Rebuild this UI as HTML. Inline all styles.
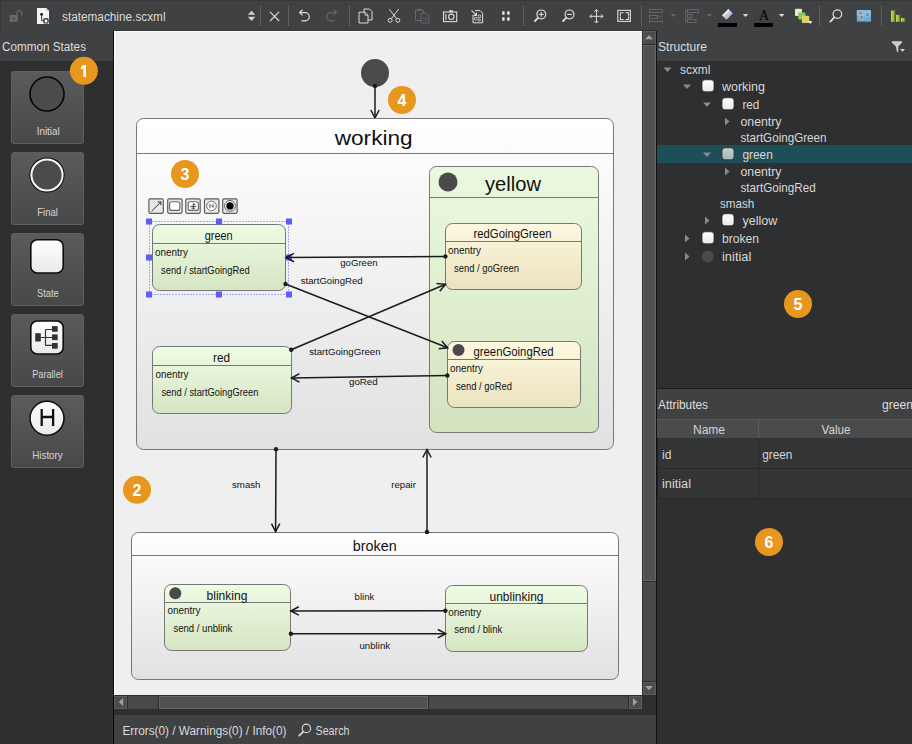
<!DOCTYPE html><html><head><meta charset="utf-8"><style>html,body{margin:0;padding:0;width:912px;height:744px;overflow:hidden;background:#404143;}svg{display:block;font-family:"Liberation Sans",sans-serif;}</style></head><body>
<svg width="912" height="744" viewBox="0 0 912 744">
<defs>
<linearGradient id="gWork" x1="0" y1="0" x2="0" y2="1"><stop offset="0" stop-color="#ffffff"/><stop offset="1" stop-color="#e1e1e1"/></linearGradient>
<linearGradient id="gGreen" x1="0" y1="0" x2="0" y2="1"><stop offset="0" stop-color="#effce6"/><stop offset="1" stop-color="#d5e5c2"/></linearGradient>
<linearGradient id="gYel" x1="0" y1="0" x2="0" y2="1"><stop offset="0" stop-color="#ebfadf"/><stop offset="1" stop-color="#d3e3c0"/></linearGradient>
<linearGradient id="gCream" x1="0" y1="0" x2="0" y2="1"><stop offset="0" stop-color="#fdf8e0"/><stop offset="1" stop-color="#ebe3bf"/></linearGradient>
<linearGradient id="gBtn" x1="0" y1="0" x2="0" y2="1"><stop offset="0" stop-color="#5a5b5d"/><stop offset="1" stop-color="#47484a"/></linearGradient>
<linearGradient id="gIcon" x1="0" y1="0" x2="0" y2="1"><stop offset="0" stop-color="#ffffff"/><stop offset="1" stop-color="#e9e9e9"/></linearGradient>
<linearGradient id="gIconSel" x1="0" y1="0" x2="0" y2="1"><stop offset="0" stop-color="#c8d0d2"/><stop offset="1" stop-color="#a9b5b8"/></linearGradient>
</defs>
<rect x="0" y="0" width="912" height="31" fill="#404143"/>
<rect x="0" y="0" width="912" height="1" fill="#37383a"/>
<rect x="0" y="0" width="1" height="31" fill="#37383a"/>
<rect x="9.8" y="15" width="8" height="6.8" fill="#68696b"/>
<rect x="12.6" y="17.4" width="2.4" height="2.4" fill="#4a4b4d"/>
<path d="M17 15.2 V12.8 A2.3 2.3 0 0 1 21.6 12.8 V15.6" fill="none" stroke="#68696b" stroke-width="1.2"/>
<path d="M37 8 H46 L49 11 V24 H37 Z" fill="#f4f4f4"/>
<path d="M46 8 V11 H49 Z" fill="#d0d0d0"/>
<circle cx="41.6" cy="14.4" r="1.4" fill="#000"/>
<path d="M41.6 14.6 V20.7 H43.5" fill="none" stroke="#222" stroke-width="0.9"/>
<rect x="43.9" y="18.9" width="4.1" height="4.1" rx="0.8" fill="#fff" stroke="#1a1a1a" stroke-width="1.2"/>
<text x="62" y="21" font-size="12" fill="#dcdcdc" textLength="103.5" lengthAdjust="spacingAndGlyphs" >statemachine.scxml</text>
<path d="M247.8 14.8 L251.6 10.8 L255.4 14.8 Z M247.8 16.8 L255.4 16.8 L251.6 21 Z" fill="#d0d0d0"/>
<rect x="260" y="5" width="1" height="21" fill="#5d5e60"/>
<path d="M270 11.8 L279.2 21 M279.2 11.8 L270 21" stroke="#dcdcdc" stroke-width="1.1"/>
<rect x="288" y="5" width="1" height="21" fill="#5d5e60"/>
<path d="M300 12.6 H305.2 A4.1 4.1 0 0 1 305.2 20.8 H301.3" fill="none" stroke="#dcdcdc" stroke-width="1.2"/>
<path d="M302.5 9.8 L299.6 12.6 L302.5 15.4" fill="none" stroke="#dcdcdc" stroke-width="1.2"/>
<path d="M336 12.6 H330.8 A4.1 4.1 0 0 0 330.8 20.8 H334.7" fill="none" stroke="#65666a" stroke-width="1.2"/>
<path d="M333.5 9.8 L336.4 12.6 L333.5 15.4" fill="none" stroke="#65666a" stroke-width="1.2"/>
<rect x="349" y="5" width="1" height="21" fill="#5d5e60"/>
<path d="M364 9 H369.5 L372 11.5 V20 H364 Z" fill="none" stroke="#dcdcdc" stroke-width="1"/>
<path d="M359 12.2 H365 L368 15.2 V23 H359 Z" fill="#404143" stroke="#dcdcdc" stroke-width="1"/>
<path d="M365 12.2 V15.2 H368" fill="none" stroke="#dcdcdc" stroke-width="0.8"/>
<path d="M389.3 9.2 L396.5 18.6 M398.6 9.2 L391.4 18.6" stroke="#dcdcdc" stroke-width="1"/>
<circle cx="390.1" cy="20.3" r="2" fill="none" stroke="#dcdcdc" stroke-width="1"/>
<circle cx="397.8" cy="20.3" r="2" fill="none" stroke="#dcdcdc" stroke-width="1"/>
<path d="M415.5 10.2 H423.5 V20.5 H415.5 Z" fill="none" stroke="#65666a" stroke-width="1"/>
<rect x="417.6" y="8.8" width="3.8" height="2.2" fill="#65666a"/>
<path d="M421 13.2 H426 L428.8 16 V23 H421 Z" fill="#404143" stroke="#65666a" stroke-width="1"/>
<path d="M422.6 18 H427 M422.6 20.3 H427" stroke="#65666a" stroke-width="0.8"/>
<rect x="443.5" y="12" width="13.2" height="9.6" fill="none" stroke="#dcdcdc" stroke-width="1.1"/>
<rect x="449.2" y="10.2" width="3.6" height="2" fill="#dcdcdc"/>
<circle cx="451.3" cy="16.8" r="2.7" fill="none" stroke="#dcdcdc" stroke-width="1.1"/>
<rect x="445.3" y="14" width="1.1" height="6" fill="#dcdcdc"/>
<path d="M475 10.6 H480 L482.6 13.2 V22.8 H473 V15" fill="none" stroke="#dcdcdc" stroke-width="1"/>
<path d="M471.4 10.4 L476.4 15.4 M476.4 12.6 V15.4 H473.6" fill="none" stroke="#dcdcdc" stroke-width="1.1"/>
<path d="M474.5 17.5 h2.5 v2.5 h-2.5 Z M478.2 15 h2.5 v2.5 h-2.5 Z M478.2 19 h2 v2 h-2 Z" fill="none" stroke="#dcdcdc" stroke-width="0.7"/>
<ellipse cx="503.4" cy="13" rx="1.5" ry="2" fill="#dcdcdc"/>
<ellipse cx="503.4" cy="19" rx="1.5" ry="2" fill="#dcdcdc"/>
<ellipse cx="508.4" cy="13" rx="1.5" ry="2" fill="#dcdcdc"/>
<ellipse cx="508.4" cy="19" rx="1.5" ry="2" fill="#dcdcdc"/>
<rect x="523" y="5" width="1" height="21" fill="#5d5e60"/>
<circle cx="541.3" cy="14.4" r="4.4" fill="none" stroke="#dcdcdc" stroke-width="1.2"/>
<path d="M538.0999999999999 17.8 L534.9 21" stroke="#dcdcdc" stroke-width="1.8" stroke-linecap="round"/>
<path d="M538.9 14.4 H543.6999999999999" stroke="#dcdcdc" stroke-width="1.1"/>
<path d="M541.3 12 V16.8" stroke="#dcdcdc" stroke-width="1.1"/>
<circle cx="569.5" cy="14.4" r="4.4" fill="none" stroke="#dcdcdc" stroke-width="1.2"/>
<path d="M566.3 17.8 L563.1 21" stroke="#dcdcdc" stroke-width="1.8" stroke-linecap="round"/>
<path d="M567.1 14.4 H571.9" stroke="#dcdcdc" stroke-width="1.1"/>
<path d="M596.4 9.6 V23 M589.8 16.3 H603" stroke="#dcdcdc" stroke-width="1"/>
<path d="M594.4 11.6 L596.4 9.6 L598.4 11.6 M594.4 21 L596.4 23 L598.4 21 M591.8 14.3 L589.8 16.3 L591.8 18.3 M601 14.3 L603 16.3 L601 18.3" fill="none" stroke="#dcdcdc" stroke-width="1"/>
<rect x="617.8" y="10.4" width="12.6" height="11" fill="none" stroke="#dcdcdc" stroke-width="1.1"/>
<path d="M620.4 15.8 V12.8 H623.6 M625.4 12.8 H628.5 V15.8 M628.5 16.6 V19.5 H625.4 M623.6 19.5 H620.4 V16.6" fill="none" stroke="#dcdcdc" stroke-width="1.1"/>
<rect x="641" y="5" width="1" height="21" fill="#5d5e60"/>
<rect x="649.5" y="9.5" width="13" height="3" fill="none" stroke="#65666a" stroke-width="1"/>
<rect x="649.5" y="15.5" width="8" height="3" fill="none" stroke="#65666a" stroke-width="1"/>
<rect x="658" y="15.5" width="4.5" height="3" fill="#4c4d4f"/>
<path d="M649.5 20 V23 M649.5 21.5 H662.5 M662.5 20 V23" stroke="#65666a" stroke-width="1" fill="none"/>
<path d="M670.7 13.9 H676.3 L673.5 16.900000000000002 Z" fill="#65666a"/>
<rect x="685.2" y="9" width="1" height="14" fill="#65666a"/>
<rect x="687.5" y="9.5" width="11" height="3" fill="none" stroke="#65666a" stroke-width="1"/>
<rect x="687.5" y="14.5" width="4.5" height="3" fill="none" stroke="#65666a" stroke-width="1"/>
<rect x="687.5" y="19.5" width="8.5" height="3" fill="none" stroke="#65666a" stroke-width="1"/>
<path d="M706.7 13.9 H712.3 L709.5 16.900000000000002 Z" fill="#65666a"/>
<path d="M722.1 15.4 L728.4 9.1 L732.8 13.3 L726.5 19.7 Z" fill="#c4c4c8"/>
<path d="M722.1 15.4 L728.4 9.1 L729.6 10.3 L723.4 16.6 Z" fill="#f2f2f2"/>
<path d="M728.2 10.8 L728.6 14.2 L727.4 13.6 Z" fill="#f6f6f6"/>
<path d="M732.6 12.3 Q734.6 13.6 733.6 17.8" fill="none" stroke="#1f3cc4" stroke-width="1.5"/>
<rect x="718" y="23" width="19" height="4" fill="#000"/>
<path d="M742.7 14.1 H748.3 L745.5 17.1 Z" fill="#d8d8d8"/>
<text x="764" y="20.1" font-size="14.5" fill="#000" text-anchor="middle" font-family="Liberation Serif">A</text>
<rect x="754.2" y="23" width="18.8" height="4" fill="#000"/>
<path d="M778.9000000000001 14.1 H784.5 L781.7 17.1 Z" fill="#d8d8d8"/>
<rect x="795" y="8.8" width="7" height="7.2" rx="1" fill="#e6e6e6"/>
<rect x="798.2" y="12.4" width="7.3" height="7" rx="1" fill="#7ad34a"/>
<rect x="801.9" y="15.8" width="7.3" height="7.2" rx="0.6" fill="#e2cd68"/>
<path d="M808.0 20.900000000000002 H812.4000000000001 L810.2 23.900000000000002 Z" fill="#f0f0f0"/>
<rect x="819" y="5" width="1" height="21" fill="#5d5e60"/>
<circle cx="837.4" cy="14.1" r="4.3" fill="none" stroke="#dcdcdc" stroke-width="1.2"/>
<path d="M834.3 17.3 L830.3 21.6" stroke="#dcdcdc" stroke-width="1.8" stroke-linecap="round"/>
<rect x="856.8" y="9.9" width="14.2" height="12.1" rx="0.8" fill="#5fb0de"/>
<rect x="856.8" y="9.9" width="14.2" height="6" rx="0.8" fill="#86c8ec" opacity="0.7"/>
<rect x="857" y="21.2" width="13.8" height="0.8" fill="#3d7ea6"/>
<rect x="858.3" y="11.2" width="3.8" height="3.6" fill="#8d8d8d" stroke="#c4c4c4" stroke-width="0.6"/>
<rect x="865.5" y="13" width="3.8" height="3.6" fill="#8d8d8d" stroke="#c4c4c4" stroke-width="0.6"/>
<rect x="860" y="15.7" width="3.8" height="3.6" fill="#8d8d8d" stroke="#c4c4c4" stroke-width="0.6"/>
<rect x="881" y="5" width="1" height="21" fill="#5d5e60"/>
<rect x="891.1" y="10.6" width="4" height="11.1" fill="#a6c23a"/>
<rect x="893.9" y="10.6" width="1.2" height="11.1" fill="#6f8a1e"/>
<rect x="891.1" y="10.6" width="1" height="11.1" fill="#c3d960"/>
<rect x="896.1" y="14.9" width="4" height="6.8" fill="#a6c23a"/>
<rect x="898.9" y="14.9" width="1.2" height="6.8" fill="#6f8a1e"/>
<rect x="896.1" y="14.9" width="1" height="6.8" fill="#c3d960"/>
<rect x="901.1" y="17.9" width="4" height="3.8" fill="#a6c23a"/>
<rect x="903.9" y="17.9" width="1.2" height="3.8" fill="#6f8a1e"/>
<rect x="901.1" y="17.9" width="1" height="3.8" fill="#c3d960"/>
<rect x="0" y="31" width="113" height="713" fill="#2e2f31"/>
<rect x="0" y="31" width="113" height="30" fill="#404143"/>
<text x="2" y="51" font-size="12" fill="#dedede" textLength="84" lengthAdjust="spacingAndGlyphs" >Common States</text>
<rect x="11.5" y="71.5" width="72" height="72" rx="2.5" fill="url(#gBtn)" stroke="#5e5f61" stroke-width="1"/>
<circle cx="47" cy="94" r="17" fill="#4b4b4b" stroke="#050505" stroke-width="1.6"/>
<text x="48.2" y="135" font-size="10.2" fill="#d6d6d6" text-anchor="middle" textLength="23" lengthAdjust="spacingAndGlyphs" >Initial</text>
<rect x="11.5" y="152.5" width="72" height="72" rx="2.5" fill="url(#gBtn)" stroke="#5e5f61" stroke-width="1"/>
<circle cx="47" cy="175" r="17.6" fill="#0a0a0a" />
<circle cx="47" cy="175" r="15.6" fill="#4b4b4b" stroke="#fafafa" stroke-width="2"/>
<text x="47.6" y="216" font-size="10.2" fill="#d6d6d6" text-anchor="middle" textLength="20.6" lengthAdjust="spacingAndGlyphs" >Final</text>
<rect x="11.5" y="233.5" width="72" height="72" rx="2.5" fill="url(#gBtn)" stroke="#5e5f61" stroke-width="1"/>
<rect x="30.8" y="239.7" width="32.4" height="33.3" rx="6.5" fill="url(#gIcon)" stroke="#0d0d0d" stroke-width="1.6"/>
<text x="47.9" y="297" font-size="10.2" fill="#d6d6d6" text-anchor="middle" textLength="21.6" lengthAdjust="spacingAndGlyphs" >State</text>
<rect x="11.5" y="314.5" width="72" height="72" rx="2.5" fill="url(#gBtn)" stroke="#5e5f61" stroke-width="1"/>
<rect x="30.8" y="321" width="32.4" height="33" rx="6.5" fill="url(#gIcon)" stroke="#0d0d0d" stroke-width="1.6"/>
<rect x="35.2" y="333.2" width="5.6" height="8.3" fill="#333"/>
<rect x="52" y="326.1" width="5.7" height="5.7" fill="#333"/>
<rect x="52" y="334.4" width="5.7" height="5.7" fill="#333"/>
<rect x="52" y="343" width="5.7" height="5.7" fill="#333"/>
<path d="M40.8 337.5 H52 M45.5 329.5 V345.4 M45.5 329.5 H52 M45.5 345.4 H52" stroke="#333" stroke-width="1.2" fill="none"/>
<text x="47.5" y="378" font-size="10.2" fill="#d6d6d6" text-anchor="middle" textLength="30.6" lengthAdjust="spacingAndGlyphs" >Parallel</text>
<rect x="11.5" y="395.5" width="72" height="72" rx="2.5" fill="url(#gBtn)" stroke="#5e5f61" stroke-width="1"/>
<circle cx="47" cy="418.2" r="17" fill="url(#gIcon)" stroke="#0d0d0d" stroke-width="1.5"/>
<path d="M41.7 408.9 V426.1 M53.1 408.9 V426.1 M41.7 417 H53.1" stroke="#111" stroke-width="2.3" fill="none"/>
<text x="47.5" y="459" font-size="10.2" fill="#d6d6d6" text-anchor="middle" textLength="30.6" lengthAdjust="spacingAndGlyphs" >History</text>
<rect x="113" y="30" width="543" height="714" fill="#2e2f31"/>
<rect x="113" y="30" width="530" height="1" fill="#37383a"/>
<rect x="113" y="31" width="1" height="713" fill="#080808"/>
<rect x="114" y="31" width="528" height="664" fill="#efefef"/>
<rect x="114" y="31" width="528" height="1" fill="#ffffff"/>
<rect x="114" y="31" width="1" height="664" fill="#ffffff"/>
<circle cx="375" cy="73" r="14" fill="#4a4a4a"/>
<line x1="375" y1="86" x2="375" y2="118" stroke="#1b1b1b" stroke-width="1.5"/>
<path d="M370.80,110.00 L375,118 L379.20,110.00" fill="none" stroke="#1b1b1b" stroke-width="1.5" stroke-linejoin="miter"/>
<circle cx="375" cy="86" r="2.2" fill="#1b1b1b"/>
<rect x="136.5" y="118.5" width="477" height="331" rx="7" fill="url(#gWork)" stroke="#777777" stroke-width="1"/>
<line x1="136" y1="153.5" x2="614" y2="153.5" stroke="#777777" stroke-width="1"/>
<text x="373.7" y="145" font-size="20.5" fill="#111" text-anchor="middle" textLength="78" lengthAdjust="spacingAndGlyphs" >working</text>
<rect x="429.5" y="166.5" width="169" height="266" rx="7" fill="url(#gYel)" stroke="#777777" stroke-width="1"/>
<line x1="429" y1="197.5" x2="599" y2="197.5" stroke="#777777" stroke-width="1"/>
<circle cx="448" cy="182" r="9.5" fill="#4a4a4a"/>
<text x="513" y="191" font-size="19.5" fill="#111" text-anchor="middle" textLength="56" lengthAdjust="spacingAndGlyphs" >yellow</text>
<rect x="445.5" y="223.5" width="136" height="66" rx="7" fill="url(#gCream)" stroke="#777777" stroke-width="1"/>
<line x1="445" y1="241.5" x2="582" y2="241.5" stroke="#777777" stroke-width="1"/>
<text x="512.5" y="238" font-size="13" fill="#111" text-anchor="middle" textLength="78" lengthAdjust="spacingAndGlyphs" >redGoingGreen</text>
<text x="448" y="254" font-size="10.5" fill="#111" textLength="33" lengthAdjust="spacingAndGlyphs" >onentry</text>
<text x="454" y="271.5" font-size="10.5" fill="#111" textLength="65" lengthAdjust="spacingAndGlyphs" >send / goGreen</text>
<rect x="447.5" y="341.5" width="133" height="66" rx="7" fill="url(#gCream)" stroke="#777777" stroke-width="1"/>
<line x1="447" y1="359.5" x2="581" y2="359.5" stroke="#777777" stroke-width="1"/>
<circle cx="458.5" cy="350" r="6" fill="#4a4a4a"/>
<text x="513.5" y="356" font-size="13" fill="#111" text-anchor="middle" textLength="80" lengthAdjust="spacingAndGlyphs" >greenGoingRed</text>
<text x="450" y="372" font-size="10.5" fill="#111" textLength="33" lengthAdjust="spacingAndGlyphs" >onentry</text>
<text x="456" y="389.5" font-size="10.5" fill="#111" textLength="56" lengthAdjust="spacingAndGlyphs" >send / goRed</text>
<rect x="152.5" y="224.5" width="133" height="66" rx="7" fill="url(#gGreen)" stroke="#777777" stroke-width="1"/>
<line x1="152" y1="243.5" x2="286" y2="243.5" stroke="#777777" stroke-width="1"/>
<text x="218.7" y="239.8" font-size="12.3" fill="#111" text-anchor="middle" textLength="28" lengthAdjust="spacingAndGlyphs" >green</text>
<text x="155" y="255.9" font-size="10.5" fill="#111" textLength="33" lengthAdjust="spacingAndGlyphs" >onentry</text>
<text x="161" y="273.5" font-size="10.5" fill="#111" textLength="88.6" lengthAdjust="spacingAndGlyphs" >send / startGoingRed</text>
<rect x="152.5" y="346.5" width="139" height="67" rx="7" fill="url(#gGreen)" stroke="#777777" stroke-width="1"/>
<line x1="152" y1="365.5" x2="292" y2="365.5" stroke="#777777" stroke-width="1"/>
<text x="221.6" y="361.7" font-size="12.3" fill="#111" text-anchor="middle" textLength="17" lengthAdjust="spacingAndGlyphs" >red</text>
<text x="155.4" y="378" font-size="10.5" fill="#111" textLength="33" lengthAdjust="spacingAndGlyphs" >onentry</text>
<text x="161.4" y="395.5" font-size="10.5" fill="#111" textLength="97" lengthAdjust="spacingAndGlyphs" >send / startGoingGreen</text>
<rect x="149.5" y="221.5" width="139" height="73" fill="none" stroke="#5d5dff" stroke-width="1" stroke-dasharray="1,2"/>
<rect x="146" y="218.5" width="6" height="6" fill="#5d5dff"/>
<rect x="146" y="254.5" width="6" height="6" fill="#5d5dff"/>
<rect x="146" y="291.5" width="6" height="6" fill="#5d5dff"/>
<rect x="216" y="218.5" width="6" height="6" fill="#5d5dff"/>
<rect x="216" y="291.5" width="6" height="6" fill="#5d5dff"/>
<rect x="286" y="218.5" width="6" height="6" fill="#5d5dff"/>
<rect x="286" y="254.5" width="6" height="6" fill="#5d5dff"/>
<rect x="286" y="291.5" width="6" height="6" fill="#5d5dff"/>
<rect x="148.9" y="198.9" width="14.4" height="14.4" rx="1.2" fill="#e9e9e9" stroke="#5c5c5c" stroke-width="1.2"/>
<rect x="167.7" y="198.9" width="14.4" height="14.4" rx="1.2" fill="#e9e9e9" stroke="#5c5c5c" stroke-width="1.2"/>
<rect x="185.79999999999998" y="198.9" width="14.4" height="14.4" rx="1.2" fill="#e9e9e9" stroke="#5c5c5c" stroke-width="1.2"/>
<rect x="204.5" y="198.9" width="14.4" height="14.4" rx="1.2" fill="#e9e9e9" stroke="#5c5c5c" stroke-width="1.2"/>
<rect x="222.7" y="198.9" width="14.4" height="14.4" rx="1.2" fill="#e9e9e9" stroke="#5c5c5c" stroke-width="1.2"/>
<path d="M151.4 211.4 L160.8 202 M157.6 201.9 H160.9 V205.2" fill="none" stroke="#1e1e1e" stroke-width="0.9"/>
<rect x="169.6" y="201.8" width="10.2" height="8.6" rx="2" fill="#fff" stroke="#666" stroke-width="1.1"/>
<rect x="188.2" y="201.8" width="10.2" height="8.6" rx="2" fill="#fff" stroke="#666" stroke-width="1.1"/>
<path d="M190.3 206.4 H196.3 M193.3 203.2 V209.4 M193.3 204.4 H195.3 M191.3 208.2 H195.3" stroke="#222" stroke-width="0.8" fill="none"/>
<circle cx="211.5" cy="205.9" r="4.8" fill="#fff" stroke="#555" stroke-width="0.8"/>
<path d="M209.9 203.6 V208.2 M213.1 203.6 V208.2 M209.9 205.9 H213.1" stroke="#5a4a6a" stroke-width="0.8"/>
<circle cx="230" cy="205.9" r="5.4" fill="#fff" stroke="#333" stroke-width="0.8"/>
<circle cx="230" cy="205.9" r="3.7" fill="#000"/>
<rect x="131.5" y="532.5" width="487" height="147" rx="7" fill="url(#gWork)" stroke="#777777" stroke-width="1"/>
<line x1="131" y1="555.5" x2="619" y2="555.5" stroke="#777777" stroke-width="1"/>
<text x="374.7" y="550.7" font-size="15.5" fill="#111" text-anchor="middle" textLength="44" lengthAdjust="spacingAndGlyphs" >broken</text>
<rect x="164.5" y="584.5" width="126" height="66" rx="7" fill="url(#gGreen)" stroke="#777777" stroke-width="1"/>
<line x1="164" y1="602.5" x2="291" y2="602.5" stroke="#777777" stroke-width="1"/>
<circle cx="175.3" cy="593.3" r="6" fill="#4a4a4a"/>
<text x="227" y="600" font-size="12.5" fill="#111" text-anchor="middle" textLength="41" lengthAdjust="spacingAndGlyphs" >blinking</text>
<text x="167.4" y="614.4" font-size="10.5" fill="#111" textLength="33" lengthAdjust="spacingAndGlyphs" >onentry</text>
<text x="173.4" y="632" font-size="10.5" fill="#111" textLength="59" lengthAdjust="spacingAndGlyphs" >send / unblink</text>
<rect x="445.5" y="585.5" width="142" height="66" rx="7" fill="url(#gGreen)" stroke="#777777" stroke-width="1"/>
<line x1="445" y1="603.5" x2="588" y2="603.5" stroke="#777777" stroke-width="1"/>
<text x="516.5" y="600.8" font-size="12.5" fill="#111" text-anchor="middle" textLength="54" lengthAdjust="spacingAndGlyphs" >unblinking</text>
<text x="448.2" y="615.5" font-size="10.5" fill="#111" textLength="33" lengthAdjust="spacingAndGlyphs" >onentry</text>
<text x="454.2" y="633.3" font-size="10.5" fill="#111" textLength="48" lengthAdjust="spacingAndGlyphs" >send / blink</text>
<line x1="445.4" y1="256.4" x2="286" y2="257.6" stroke="#1b1b1b" stroke-width="1.5"/>
<path d="M293.97,253.34 L286,257.6 L294.03,261.74" fill="none" stroke="#1b1b1b" stroke-width="1.5" stroke-linejoin="miter"/>
<circle cx="445.4" cy="256.4" r="2.2" fill="#1b1b1b"/>
<text x="340.2" y="265.7" font-size="9.7" fill="#111" textLength="37.5" lengthAdjust="spacingAndGlyphs" >goGreen</text>
<line x1="285.5" y1="284" x2="447.7" y2="347.8" stroke="#1b1b1b" stroke-width="1.5"/>
<path d="M438.72,348.78 L447.7,347.8 L441.79,340.96" fill="none" stroke="#1b1b1b" stroke-width="1.5" stroke-linejoin="miter"/>
<circle cx="285.5" cy="284" r="2.2" fill="#1b1b1b"/>
<text x="300.7" y="284" font-size="9.7" fill="#111" textLength="62" lengthAdjust="spacingAndGlyphs" >startGoingRed</text>
<line x1="291.2" y1="349.8" x2="445.5" y2="284.3" stroke="#1b1b1b" stroke-width="1.5"/>
<path d="M439.78,291.29 L445.5,284.3 L436.49,283.56" fill="none" stroke="#1b1b1b" stroke-width="1.5" stroke-linejoin="miter"/>
<circle cx="291.2" cy="349.8" r="2.2" fill="#1b1b1b"/>
<text x="309.2" y="354.7" font-size="9.7" fill="#111" textLength="71.4" lengthAdjust="spacingAndGlyphs" >startGoingGreen</text>
<line x1="447.4" y1="375.5" x2="291.5" y2="378" stroke="#1b1b1b" stroke-width="1.5"/>
<path d="M299.43,373.67 L291.5,378 L299.57,382.07" fill="none" stroke="#1b1b1b" stroke-width="1.5" stroke-linejoin="miter"/>
<circle cx="447.4" cy="375.5" r="2.2" fill="#1b1b1b"/>
<text x="349" y="385.3" font-size="9.7" fill="#111" textLength="28.7" lengthAdjust="spacingAndGlyphs" >goRed</text>
<line x1="276" y1="449.2" x2="275.6" y2="531.7" stroke="#1b1b1b" stroke-width="1.5"/>
<path d="M271.44,523.68 L275.6,531.7 L279.84,523.72" fill="none" stroke="#1b1b1b" stroke-width="1.5" stroke-linejoin="miter"/>
<circle cx="276" cy="449.2" r="2.2" fill="#1b1b1b"/>
<text x="232" y="487.8" font-size="9.7" fill="#111" textLength="28.5" lengthAdjust="spacingAndGlyphs" >smash</text>
<line x1="427" y1="532" x2="427" y2="449.5" stroke="#1b1b1b" stroke-width="1.5"/>
<path d="M431.20,457.50 L427,449.5 L422.80,457.50" fill="none" stroke="#1b1b1b" stroke-width="1.5" stroke-linejoin="miter"/>
<circle cx="427" cy="532" r="2.2" fill="#1b1b1b"/>
<text x="391.3" y="488" font-size="9.7" fill="#111" textLength="24.6" lengthAdjust="spacingAndGlyphs" >repair</text>
<line x1="445.4" y1="610.7" x2="290.8" y2="611" stroke="#1b1b1b" stroke-width="1.5"/>
<path d="M298.79,606.78 L290.8,611 L298.81,615.18" fill="none" stroke="#1b1b1b" stroke-width="1.5" stroke-linejoin="miter"/>
<circle cx="445.4" cy="610.7" r="2.2" fill="#1b1b1b"/>
<text x="354.6" y="599.8" font-size="9.7" fill="#111" textLength="19.7" lengthAdjust="spacingAndGlyphs" >blink</text>
<line x1="290.9" y1="633.7" x2="445.8" y2="633.7" stroke="#1b1b1b" stroke-width="1.5"/>
<path d="M437.80,637.90 L445.8,633.7 L437.80,629.50" fill="none" stroke="#1b1b1b" stroke-width="1.5" stroke-linejoin="miter"/>
<circle cx="290.9" cy="633.7" r="2.2" fill="#1b1b1b"/>
<text x="359.5" y="648.5" font-size="9.7" fill="#111" textLength="30.6" lengthAdjust="spacingAndGlyphs" >unblink</text>
<rect x="642" y="31" width="14" height="665" fill="#2b2c2e"/>
<rect x="643" y="31" width="13" height="664" fill="#48494b"/>
<rect x="643.5" y="31.5" width="12" height="13" fill="#4b4c4e" stroke="#5c5d5f" stroke-width="1"/>
<rect x="643" y="44" width="13" height="1" fill="#2b2c2e"/>
<path d="M645 39.2 L649 35 L653 39.2 Z" fill="#a0a0a0"/>
<rect x="643.5" y="45.5" width="12" height="535" fill="#505153" stroke="#646567" stroke-width="1"/>
<rect x="643" y="581" width="13" height="1" fill="#2b2c2e"/>
<rect x="643" y="681" width="13" height="1" fill="#2b2c2e"/>
<rect x="643.5" y="682.5" width="12" height="12" fill="#4b4c4e" stroke="#5c5d5f" stroke-width="1"/>
<path d="M645 686 L653 686 L649 690.2 Z" fill="#a0a0a0"/>
<rect x="114" y="695" width="542" height="1" fill="#2b2c2e"/>
<rect x="114" y="696" width="528" height="13" fill="#48494b"/>
<rect x="642" y="696" width="14" height="13" fill="#2e2f31"/>
<rect x="114.5" y="696.5" width="12" height="12" fill="#4b4c4e" stroke="#5c5d5f" stroke-width="1"/>
<rect x="127" y="696" width="1" height="13" fill="#2b2c2e"/>
<path d="M123.2 698 L118.8 702 L123.2 706 Z" fill="#a0a0a0"/>
<rect x="158" y="696" width="1" height="13" fill="#2b2c2e"/>
<rect x="159.5" y="696.5" width="268" height="12" fill="#505153" stroke="#646567" stroke-width="1"/>
<rect x="428" y="696" width="1" height="13" fill="#2b2c2e"/>
<rect x="628" y="696" width="1" height="13" fill="#2b2c2e"/>
<rect x="629.5" y="696.5" width="12" height="12" fill="#4b4c4e" stroke="#5c5d5f" stroke-width="1"/>
<path d="M632.9 698 L637.3 702 L632.9 706 Z" fill="#a0a0a0"/>
<rect x="114" y="709" width="542" height="6" fill="#2e2f31"/>
<rect x="114" y="715" width="542" height="29" fill="#404143"/>
<text x="122.5" y="735" font-size="12" fill="#dadada" textLength="164" lengthAdjust="spacingAndGlyphs" >Errors(0) / Warnings(0) / Info(0)</text>
<circle cx="306.4" cy="728.4" r="4.2" fill="none" stroke="#d6d6d6" stroke-width="1.2"/>
<path d="M303.4 731.6 L299.2 735.6" stroke="#d6d6d6" stroke-width="1.8" stroke-linecap="round"/>
<text x="315.5" y="735" font-size="12" fill="#dadada" textLength="34" lengthAdjust="spacingAndGlyphs" >Search</text>
<rect x="656" y="31" width="1" height="713" fill="#111"/>
<rect x="657" y="31" width="255" height="713" fill="#2e2f31"/>
<rect x="657" y="31" width="255" height="30" fill="#404143"/>
<text x="658" y="51" font-size="12" fill="#dedede" textLength="49" lengthAdjust="spacingAndGlyphs" >Structure</text>
<rect x="657" y="145" width="255" height="18" fill="#1d4f59"/>
<path d="M663.5,67.5 L671.5,67.5 L667.5,72.0 Z" fill="#8a8a8a"/>
<text x="680" y="74" font-size="13" fill="#d8d8d8" textLength="30.4" lengthAdjust="spacingAndGlyphs" >scxml</text>
<path d="M683,84.5 L691,84.5 L687,89.0 Z" fill="#8a8a8a"/>
<rect x="702" y="79.8" width="12" height="12" rx="3" fill="url(#gIcon)" stroke="#1b1d1e" stroke-width="0.7"/>
<text x="722" y="91" font-size="13" fill="#d8d8d8" textLength="43" lengthAdjust="spacingAndGlyphs" >working</text>
<path d="M703,102.5 L711,102.5 L707,107.0 Z" fill="#8a8a8a"/>
<rect x="722" y="97.8" width="12" height="12" rx="3" fill="url(#gIcon)" stroke="#1b1d1e" stroke-width="0.7"/>
<text x="742.4" y="109" font-size="13" fill="#d8d8d8" textLength="17" lengthAdjust="spacingAndGlyphs" >red</text>
<path d="M725,117.5 L729.5,121.5 L725,125.5 Z" fill="#8a8a8a"/>
<text x="740.5" y="126" font-size="13" fill="#d8d8d8" textLength="41" lengthAdjust="spacingAndGlyphs" >onentry</text>
<text x="740.5" y="142" font-size="13" fill="#d8d8d8" textLength="86" lengthAdjust="spacingAndGlyphs" >startGoingGreen</text>
<path d="M703,152.5 L711,152.5 L707,157.0 Z" fill="#8a8a8a"/>
<rect x="722" y="147.8" width="12" height="12" rx="3" fill="url(#gIconSel)" stroke="#1b1d1e" stroke-width="0.7"/>
<text x="742.4" y="159" font-size="13" fill="#d8d8d8" textLength="30.4" lengthAdjust="spacingAndGlyphs" >green</text>
<path d="M725,167.5 L729.5,171.5 L725,175.5 Z" fill="#8a8a8a"/>
<text x="740.5" y="176" font-size="13" fill="#d8d8d8" textLength="41" lengthAdjust="spacingAndGlyphs" >onentry</text>
<text x="740.5" y="192" font-size="13" fill="#d8d8d8" textLength="75.2" lengthAdjust="spacingAndGlyphs" >startGoingRed</text>
<text x="720" y="207.5" font-size="13" fill="#d8d8d8" textLength="34.3" lengthAdjust="spacingAndGlyphs" >smash</text>
<path d="M705,216.5 L709.5,220.5 L705,224.5 Z" fill="#8a8a8a"/>
<rect x="722" y="213.8" width="12" height="12" rx="3" fill="url(#gIcon)" stroke="#1b1d1e" stroke-width="0.7"/>
<text x="742.4" y="225" font-size="13" fill="#d8d8d8" textLength="34.9" lengthAdjust="spacingAndGlyphs" >yellow</text>
<path d="M685,234.5 L689.5,238.5 L685,242.5 Z" fill="#8a8a8a"/>
<rect x="702" y="231.8" width="12" height="12" rx="3" fill="url(#gIcon)" stroke="#1b1d1e" stroke-width="0.7"/>
<text x="722" y="243" font-size="13" fill="#d8d8d8" textLength="36.9" lengthAdjust="spacingAndGlyphs" >broken</text>
<path d="M685,252.5 L689.5,256.5 L685,260.5 Z" fill="#8a8a8a"/>
<circle cx="707.7" cy="256.5" r="6" fill="#4b4b4b" stroke="#3a3a3a" stroke-width="0.6"/>
<text x="722" y="261" font-size="13" fill="#d8d8d8" textLength="29.4" lengthAdjust="spacingAndGlyphs" >initial</text>
<path d="M891.8 41.2 H902.1 V42.6 L898.3 46.4 V51.6 L897 52.2 L895.9 46.4 L891.8 42.6 Z" fill="#cccccc"/>
<path d="M900.1 49 H905 L902.5 51.7 Z" fill="#d8d8d8"/>
<rect x="657" y="388" width="255" height="1" fill="#1a1a1a"/>
<rect x="657" y="389" width="255" height="30" fill="#404143"/>
<text x="658" y="408.5" font-size="12" fill="#dedede" textLength="50" lengthAdjust="spacingAndGlyphs" >Attributes</text>
<text x="882" y="408.5" font-size="12" fill="#dedede" textLength="31" lengthAdjust="spacingAndGlyphs" >green</text>
<rect x="657" y="419" width="255" height="19" fill="#4a4b4d"/>
<rect x="758" y="419" width="1" height="19" fill="#5e5f61"/>
<rect x="657" y="419" width="255" height="1" fill="#58595b"/>
<text x="709" y="433.5" font-size="12" fill="#d6d6d6" text-anchor="middle" textLength="32" lengthAdjust="spacingAndGlyphs" >Name</text>
<text x="836" y="433.5" font-size="12" fill="#d6d6d6" text-anchor="middle" textLength="29" lengthAdjust="spacingAndGlyphs" >Value</text>
<rect x="657" y="438" width="255" height="61" fill="#333436"/>
<rect x="657" y="468" width="255" height="1" fill="#28292b"/>
<rect x="657" y="498" width="255" height="1" fill="#28292b"/>
<rect x="758" y="438" width="1" height="61" fill="#28292b"/>
<rect x="657" y="438" width="1" height="61" fill="#1f2021"/>
<text x="662" y="458.5" font-size="12" fill="#d6d6d6" >id</text>
<text x="762.3" y="458.5" font-size="12" fill="#d6d6d6" textLength="30" lengthAdjust="spacingAndGlyphs" >green</text>
<text x="662" y="488" font-size="12" fill="#d6d6d6" textLength="29" lengthAdjust="spacingAndGlyphs" >initial</text>
<circle cx="83.9" cy="70.8" r="14" fill="#e8971e"/>
<path d="M83.2 65.1 H86.0 V76.89999999999999 H83.4 V68.2 L80.9 69.6 V67.2 Z" fill="#fff"/>
<circle cx="137" cy="489.8" r="14" fill="#e8971e"/>
<text x="137" y="495.8" font-size="16" fill="#ffffff" text-anchor="middle" font-weight="bold" >2</text>
<circle cx="185" cy="174" r="14" fill="#e8971e"/>
<text x="185" y="180" font-size="16" fill="#ffffff" text-anchor="middle" font-weight="bold" >3</text>
<circle cx="402" cy="100" r="14" fill="#e8971e"/>
<text x="402" y="106" font-size="16" fill="#ffffff" text-anchor="middle" font-weight="bold" >4</text>
<circle cx="798" cy="304" r="14" fill="#e8971e"/>
<text x="798" y="310" font-size="16" fill="#ffffff" text-anchor="middle" font-weight="bold" >5</text>
<circle cx="769" cy="542" r="14" fill="#e8971e"/>
<text x="769" y="548" font-size="16" fill="#ffffff" text-anchor="middle" font-weight="bold" >6</text>
<g id="tb"></g>
</svg></body></html>
